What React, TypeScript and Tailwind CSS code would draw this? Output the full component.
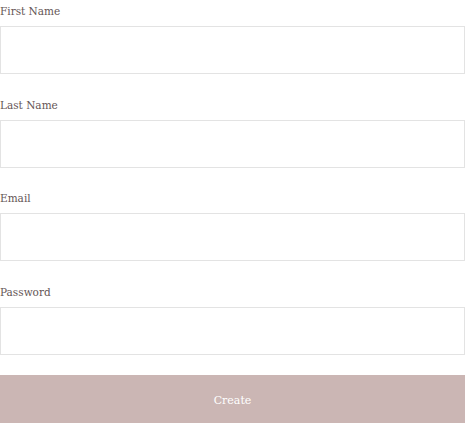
import React from 'react';

const fields = [
  { label: 'First Name', type: 'text' },
  { label: 'Last Name', type: 'text' },
  { label: 'Email', type: 'email' },
  { label: 'Password', type: 'password' },
];

export default function App() {
  return (
    <div className="w-[465px] bg-white" style={{ fontFamily: '"DejaVu Serif", serif' }}>
      <form className="flex flex-col" onSubmit={(e) => e.preventDefault()}>
        {fields.map((f) => (
          <div key={f.label} className="mb-[19.67px] flex flex-col">
            <label className="h-[26px] text-[10.5px] leading-[22px] text-[#655656]">{f.label}</label>
            <input
              type={f.type}
              className="h-[48px] w-full border border-[#e3e3e3] bg-white px-3 text-[13px] outline-none"
            />
          </div>
        ))}
        <button
          type="submit"
          className="h-[48px] w-full bg-[#cbb6b4] pt-[5px] text-[11px] text-white"
        >
          Create
        </button>
      </form>
    </div>
  );
}
